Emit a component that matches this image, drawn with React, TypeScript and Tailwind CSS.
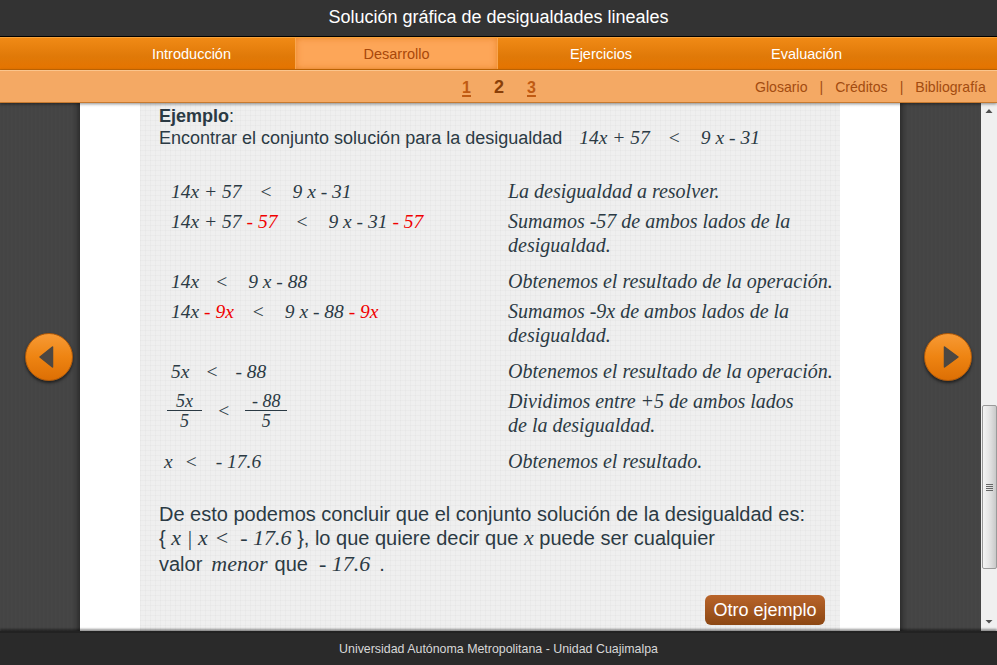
const serif = "font-['Liberation_Serif',serif] italic";

function M({ children, className = "" }: { children: React.ReactNode; className?: string }) {
  return <span className={`${serif} whitespace-pre text-[19.500px] leading-none text-[#2b3a44] ${className}`}>{children}</span>;
}

function R({ children, className = "" }: { children: React.ReactNode; className?: string }) {
  return <span className={`text-[#f00000] ${className}`}>{children}</span>;
}

function Lt({ l = 19, r = 21 }: { l?: number; r?: number }) {
  return (
    <span className="inline-block not-italic" style={{ marginLeft: l, marginRight: r }}>
      {"<"}
    </span>
  );
}

function Row({ left, right, h = 30, pl = 31 }: { left: React.ReactNode; right: React.ReactNode; h?: number; pl?: number }) {
  return (
    <div className="flex" style={{ height: h }}>
      <div className="w-[349px] shrink-0 pt-[2px] leading-[24px]" style={{ paddingLeft: pl - 19 }}>
        {left}
      </div>
      <div className={`${serif} text-[20px] leading-[24px] whitespace-pre text-[#2b3a44]`}>{right}</div>
    </div>
  );
}

function Frac({ a, b, w }: { a: string; b: string; w: string }) {
  return (
    <span className={`mt-[1px] inline-flex flex-col items-center ${w} ${serif} text-[18px] leading-[18px] text-[#2b3a44]`}>
      <span className="h-[19px] w-full border-b border-[#2b3a44] text-center whitespace-pre">{a}</span>
      <span className="h-[18px] pt-[1px]">{b}</span>
    </span>
  );
}

function RoundBtn({ dir }: { dir: "l" | "r" }) {
  return (
    <div className="h-[48px] w-[48px] rounded-full border border-[#b25a08] bg-[linear-gradient(#f79a35,#ee8412_50%,#dd6f04)] shadow-[0_2px_3px_rgba(0,0,0,0.55)]">
      <svg width="46" height="46" viewBox="0 0 46 46">
        {dir === "l" ? (
          <path d="M26.500 13 L26.500 33 L14 23 Z" fill="#4c4742" stroke="#4c4742" strokeWidth="1.500" strokeLinejoin="round" />
        ) : (
          <path d="M19.500 13 L19.500 33 L33 23 Z" fill="#4c4742" stroke="#4c4742" strokeWidth="1.500" strokeLinejoin="round" />
        )}
      </svg>
    </div>
  );
}

function Side({ dir }: { dir: "l" | "r" }) {
  return (
    <div
      className={`flex shrink-0 items-center justify-center bg-[repeating-linear-gradient(90deg,#464646_0,#434343_2px,#474747_4px)] pb-[20px] ${
        dir === "l"
          ? "w-[80px] pl-[18px] shadow-[inset_-6px_0_6px_-4px_rgba(0,0,0,0.45)]"
          : "w-[81px] pl-[15px] shadow-[inset_6px_0_6px_-4px_rgba(0,0,0,0.45)]"
      }`}
    >
      <RoundBtn dir={dir} />
    </div>
  );
}

function Scrollbar() {
  return (
    <div className="flex w-[16px] shrink-0 flex-col items-center bg-[#f0f0f0]">
      <svg width="16" height="17" viewBox="0 0 16 17" className="shrink-0">
        <path d="M8 6 L4.500 10 L11.500 10 Z" fill="#505050" />
      </svg>
      <div className="mt-[285px] flex h-[164px] w-[15px] shrink-0 items-center justify-center rounded-[2px] border border-[#9a9a9a] bg-[linear-gradient(90deg,#f4f4f4,#e6e6e6_45%,#c9c9c9)]">
        <div className="flex flex-col gap-[1px]">
          <div className="h-[1px] w-[7px] bg-[#666]" />
          <div className="h-[1px] w-[7px] bg-[#666]" />
          <div className="h-[1px] w-[7px] bg-[#666]" />
          <div className="h-[1px] w-[7px] bg-[#666]" />
        </div>
      </div>
      <div className="flex-1" />
      <svg width="16" height="17" viewBox="0 0 16 17" className="shrink-0">
        <path d="M4.500 6 L11.500 6 L8 9.500 Z" fill="#505050" />
      </svg>
    </div>
  );
}

export default function App() {
  const navCls = "flex items-center justify-center pt-[3px] text-[14.500px] text-white";
  const pageCls = "text-[16px] font-bold text-[#c05a12] underline decoration-2 underline-offset-2";
  return (
    <div className="flex h-[665px] w-[997px] flex-col overflow-hidden bg-[#444] font-['Liberation_Sans',Arial,sans-serif]">
      <header className="flex h-[37px] shrink-0 items-center justify-center border-b border-black bg-[#333] pb-[2px] text-[18px] text-white">
        Solución gráfica de desigualdades lineales
      </header>

      <nav className="flex h-[33px] shrink-0 border-t border-b border-t-[#f7a23a] border-b-[#c96a05] bg-[linear-gradient(#f08a16,#e07908_60%,#e57400)]">
        <div className={`${navCls} w-[295px] pl-[88px]`}>Introducción</div>
        <div className="flex w-[203px] items-center justify-center border-x border-[#f9a64f] bg-[#fda658] pt-[3px] text-[14.500px] text-[#a8480a] shadow-[inset_0_0_6px_rgba(230,120,20,0.7)]">
          Desarrollo
        </div>
        <div className={`${navCls} w-[206px]`}>Ejercicios</div>
        <div className={`${navCls} w-[205px]`}>Evaluación</div>
      </nav>

      <div className="relative z-10 flex h-[33px] shrink-0 items-center border-t border-b border-t-[#fbc58d] border-b-[#c77a30] bg-[#f4a964] pt-[2px] text-[#a34c10] shadow-[0_1px_3px_rgba(0,0,0,0.45)]">
        <div className="flex w-[755px] items-center justify-center pl-[243px]">
          <span className={pageCls}>1</span>
          <span className="ml-[23px] text-[18px] font-bold text-[#8a3f08]">2</span>
          <span className={`ml-[23px] ${pageCls}`}>3</span>
        </div>
        <div className="flex items-center text-[14.100px]">
          <span>Glosario</span>
          <span className="mx-[12px]">|</span>
          <span>Créditos</span>
          <span className="mx-[12px]">|</span>
          <span>Bibliografía</span>
        </div>
      </div>

      <main className="flex min-h-0 flex-1">
        <Side dir="l" />
        <div className="w-[820px] shrink-0 bg-white px-[60px]">
          <div className="h-full overflow-hidden bg-[#efefef] bg-[repeating-linear-gradient(90deg,rgba(0,0,0,0.02)_0,rgba(0,0,0,0.02)_1px,transparent_1px,transparent_5px),repeating-linear-gradient(0deg,rgba(0,0,0,0.02)_0,rgba(0,0,0,0.02)_1px,transparent_1px,transparent_5px)] pt-[2px] pl-[19px] text-[#2b3a44]">
            <div className="text-[18px] leading-[22px]">
              <div className="h-[22px]">
                <b>Ejemplo</b>:
              </div>
              <div className="h-[22px] whitespace-pre">
                Encontrar el conjunto solución para la desigualdad
                <M className="ml-[17px]">
                  14x + 57
                  <Lt />9 x - 31
                </M>
              </div>
            </div>

            <div className="mt-[30px]">
              <Row
                left={
                  <M>
                    14x + 57
                    <Lt />9 x - 31
                  </M>
                }
                right="La desigualdad a resolver."
              />
              <Row
                h={60}
                left={
                  <M>
                    {"14x + 57"}
                    <R className="ml-[5px]">- 57</R>
                    <Lt />
                    {"9 x - 31"}
                    <R className="ml-[5px]">- 57</R>
                  </M>
                }
                right={"Sumamos -57 de ambos lados de la\ndesigualdad."}
              />
              <Row
                left={
                  <M>
                    14x
                    <Lt l={17} r={21} />9 x - 88
                  </M>
                }
                right="Obtenemos el resultado de la operación."
              />
              <Row
                h={60}
                left={
                  <M>
                    {"14x "}
                    <R>- 9x</R>
                    <Lt />
                    {"9 x - 88 "}
                    <R>- 9x</R>
                  </M>
                }
                right={"Sumamos -9x de ambos lados de la\ndesigualdad."}
              />
              <Row
                left={
                  <M>
                    5x
                    <Lt l={17} r={18} />- 88
                  </M>
                }
                right="Obtenemos el resultado de la operación."
              />
              <Row
                pl={27}
                h={60}
                left={
                  <span className="flex items-start">
                    <Frac a="5x" b="5" w="w-[35px]" />
                    <M className="mx-[15px] mt-[10px] leading-[24px]">{"<"}</M>
                    <Frac a="- 88" b="5" w="w-[42px]" />
                  </span>
                }
                right={"Dividimos entre +5 de ambos lados\nde la desigualdad."}
              />
              <Row
                pl={24}
                left={
                  <M>
                    x
                    <Lt l={13} r={19} />- 17.6
                  </M>
                }
                right="Obtenemos el resultado."
              />
            </div>

            <div className="mt-[23px] text-[20px] leading-[25.500px]">
              <div className="h-[24px]">De esto podemos concluir que el conjunto solución de la desigualdad es:</div>
              <div className="h-[26px] whitespace-pre">
                {"{ "}
                <M className="text-[22px]">
                  x | x
                  <Lt l={8} r={12} />- 17.6
                </M>
                {" }, lo que quiere decir que "}
                <M className="text-[22px]">x</M>
                {" puede ser cualquier"}
              </div>
              <div className="h-[25px] whitespace-pre">
                valor
                <M className="ml-[9px] mr-[7px] text-[22px]">menor</M>
                que
                <M className="ml-[11px] mr-[9px] text-[22px]">- 17.6</M>.
              </div>
            </div>

            <div className="mt-[18px] mr-[15px] flex justify-end">
              <div className="flex h-[30px] w-[120px] items-center justify-center rounded-[6px] bg-[linear-gradient(#b9642a,#8c4713)] text-[18px] text-white">
                Otro ejemplo
              </div>
            </div>
          </div>
        </div>
        <Side dir="r" />
        <Scrollbar />
      </main>

      <footer className="flex h-[34px] shrink-0 items-center justify-center border-t-[2px] border-[#222] bg-[#2a2a2a] text-[12.400px] text-[#d8d8d8] shadow-[0_-2px_2px_rgba(0,0,0,0.4)]">
        Universidad Autónoma Metropolitana - Unidad Cuajimalpa
      </footer>
    </div>
  );
}
